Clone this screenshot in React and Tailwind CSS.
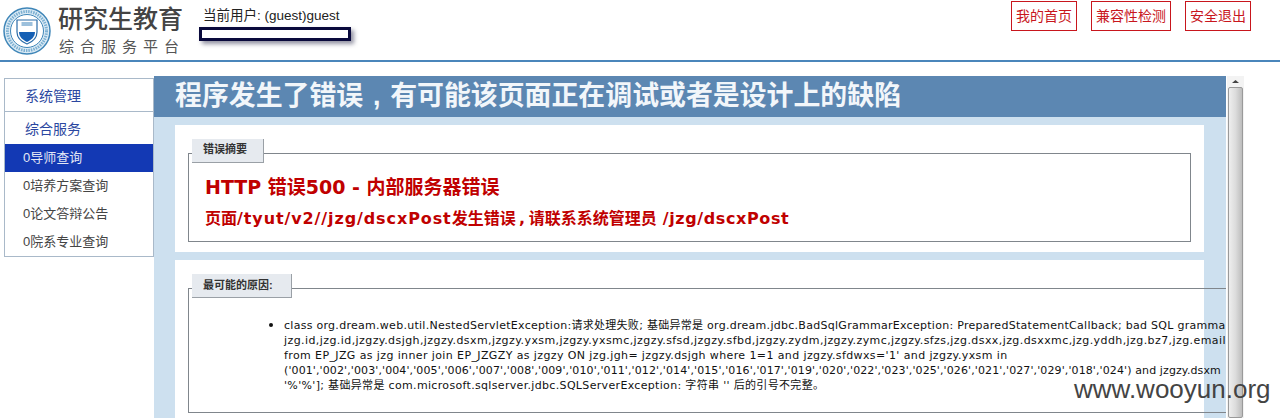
const NAV = ["0培养方案查询", "0论文答辩公告", "0院系专业查询"];

// reference is Verdana, per-line tracking keeps the line ends in place
const LINES = [
  ["class org.dream.web.util.NestedServletException:请求处理失败; 基础异常是 org.dream.jdbc.BadSqlGrammarException: PreparedStatementCallback; bad SQL gramma", "tracking-[0.28px]"],
  ["jzg.id,jzg.id,jzgzy.dsjgh,jzgzy.dsxm,jzgzy.yxsm,jzgzy.yxsmc,jzgzy.sfsd,jzgzy.sfbd,jzgzy.zydm,jzgzy.zymc,jzgzy.sfzs,jzg.dsxx,jzg.dsxxmc,jzg.yddh,jzg.bz7,jzg.email", "tracking-[0.42px]"],
  ["from EP_JZG as jzg inner join EP_JZGZY as jzgzy ON jzg.jgh= jzgzy.dsjgh where 1=1 and jzgzy.sfdwxs='1' and jzgzy.yxsm in", "tracking-[0.39px]"],
  ["('001','002','003','004','005','006','007','008','009','010','011','012','014','015','016','017','019','020','022','023','025','026','021','027','029','018','024') and jzgzy.dsxm", "tracking-[0.11px]"],
  ["'%'%']; 基础异常是 com.microsoft.sqlserver.jdbc.SQLServerException: 字符串 '' 后的引号不完整。", "tracking-[0.33px]"],
];

function Logo() {
  return (
    <svg width="48" height="48" viewBox="0 0 48 48" className="shrink-0 mt-[7px]">
      <circle cx="24" cy="24" r="23" fill="#dcebf5" stroke="#3f86b8" strokeWidth="1.5" />
      <circle cx="24" cy="24" r="19.5" fill="none" stroke="#7db0d2" strokeWidth="3" strokeDasharray="1.5 1" />
      <circle cx="24" cy="24" r="16.5" fill="#fff" stroke="#3f86b8" strokeWidth="1" />
      <path d="M14 13h20v12c0 6-5 10-10 12-5-2-10-6-10-12z" fill="#fff" stroke="#2b6ca8" strokeWidth="1.2" />
      <path d="M16 25h16c0 5-4 8-8 10-4-2-8-5-8-10z" fill="#1560b5" />
      <path d="M24 19l4 6h-8z" fill="#fff" />
      <rect x="18.5" y="15" width="11" height="4" fill="#9cc0dc" />
    </svg>
  );
}

function TopLink({ children }) {
  return (
    <a className="h-[30px] px-1 flex items-center border border-[#c8161d] text-[#c8161d] text-[14px]">{children}</a>
  );
}

function Legend({ children }) {
  return (
    <div className="absolute left-[3px] top-[-15px] h-[24px] pl-[11px] pr-[16px] flex items-center bg-[#e6eaef] border-r border-b border-[#9aa0a6] text-[11px] text-[#333]">
      {children}
    </div>
  );
}

function Comma({ className }) {
  return <span className={className}>,</span>;
}

export default function App() {
  return (
    <div className="w-[1280px] h-[418px] relative overflow-hidden bg-white font-['Liberation_Sans','Noto_Sans_CJK_SC',sans-serif]">
      <header className="h-[62px] border-b-2 border-[#4a86bb] flex items-start pl-[3px]">
        <Logo />
        <div className="ml-[7px] mt-[4px] w-[130px]">
          <div className="text-[25px] leading-[30px] font-medium text-[#444] whitespace-nowrap">研究生教育</div>
          <div className="mt-[2px] ml-px text-[15px] leading-[22px] tracking-[6px] text-[#555] whitespace-nowrap">综合服务平台</div>
        </div>
        <div className="ml-[15px] mt-[8px]">
          <div className="text-[13.5px] leading-[16px] text-[#222]">当前用户: (guest)guest</div>
          <div className="mt-[3px] -ml-[4px] w-[152px] h-[14px] bg-white border-[3px] border-[#0a0a3c] shadow-[3px_3px_4px_rgba(60,60,90,0.55)]" />
        </div>
        <div className="ml-auto mr-[29px] mt-px flex gap-[14px]">
          <TopLink>我的首页</TopLink>
          <TopLink>兼容性检测</TopLink>
          <TopLink>安全退出</TopLink>
        </div>
      </header>

      <div className="flex items-start pl-[4px] pt-[14px]">
        <aside className="w-[150px] mt-[2px] shrink-0 border border-[#a9b9c9] bg-white text-[13px]">
          <div className="h-[33px] pl-[20px] pt-[2px] flex items-center border-b border-[#a9b9c9] text-[14px] text-[#2b47a0]">系统管理</div>
          <div className="h-[32px] pl-[20px] pt-[2px] flex items-center text-[14px] text-[#2b47a0]">综合服务</div>
          <div className="h-[28px] pl-[18px] flex items-center bg-[#1339b4] text-[#e4e8f5]">0导师查询</div>
          {NAV.map(t => (
            <div key={t} className="h-[28px] pl-[18px] flex items-center text-[#444]">{t}</div>
          ))}
        </aside>

        <main className="w-[1072px] h-[342px] shrink-0 overflow-hidden bg-[#cde0ef]">
          <h1 className="h-[41px] pl-[21px] flex items-center bg-[#5c87b2] text-[26.9px] font-bold text-[#f2f6fa] whitespace-nowrap">
            <span>程序发生了错误<Comma className="inline-block w-[1em] text-center" />有可能该页面正在调试或者是设计上的缺陷</span>
          </h1>

          <section className="ml-[21px] mr-[22px] mt-[8px] h-[127px] bg-white pt-[28px] px-[13px]">
            <div className="relative h-[89px] border border-[#80868c] pl-[16px] pt-[21px] text-[#c00000] font-['DejaVu_Sans','Noto_Sans_CJK_SC',sans-serif] font-bold">
              <Legend>错误摘要</Legend>
              <div className="text-[19px] leading-[24px] whitespace-nowrap">HTTP 错误500 - 内部服务器错误</div>
              <div className="mt-[9px] text-[16px] leading-[22px] whitespace-nowrap">
                页面<span className="tracking-[0.9px]">/tyut/v2//jzg/dscxPost</span>发生错误<Comma className="inline-block w-[13px] text-center" />请联系系统管理员<span className="tracking-[0.6px]"> /jzg/dscxPost</span>
              </div>
            </div>
          </section>

          <section className="ml-[21px] mt-[8px] h-[160px] w-[1029px] bg-white pt-[28px] pl-[13px]">
            <div className="relative w-[1038px] h-[125px] border-t border-b border-l border-[#80868c]">
              <Legend><span className="font-bold mr-[2px]">最可能的原因:</span></Legend>
              <ul className="list-disc pl-[95px] pt-[28px] w-[1037px] overflow-hidden text-[11px] leading-[15px] text-[#111] marker:text-[14px] font-['DejaVu_Sans','Noto_Sans_CJK_SC',sans-serif] whitespace-nowrap">
                <li>
                  {LINES.map(([text, cls]) => (
                    <div key={text} className={cls}>{text}</div>
                  ))}
                </li>
              </ul>
            </div>
          </section>
        </main>

        <div className="w-[17px] ml-px h-[342px] shrink-0 flex flex-col items-center bg-[#f3f3f3]">
          <svg width="9" height="9" viewBox="0 0 9 9" className="mt-[1px]"><path d="M1 6l3.5-3L8 6z" fill="#444" /></svg>
          <div className="mt-[1px] w-[15px] flex-1 rounded-[2px] border border-[#9a9a9a] bg-gradient-to-r from-[#eeeeee] via-[#dcdcdc] to-[#bdbdbd]" />
        </div>
      </div>

      <div className="absolute left-[1074px] top-[374px] text-[26px] leading-[30px] text-[#444]">www.wooyun.org</div>
    </div>
  );
}
